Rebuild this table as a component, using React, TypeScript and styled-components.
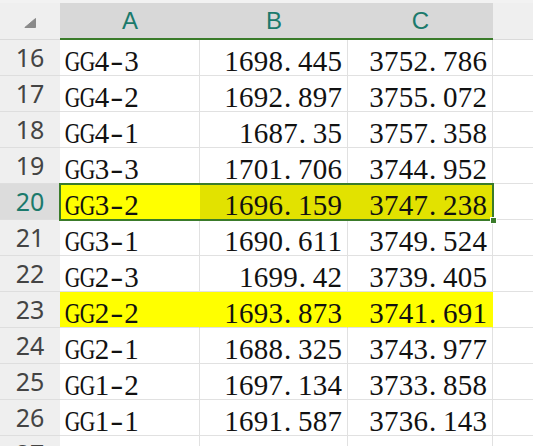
import React from 'react';
import styled, { createGlobalStyle } from 'styled-components';

const GlobalStyle = createGlobalStyle`
  html, body { margin: 0; padding: 0; background: #ffffff; overflow: hidden; }
  body { width: 533px; height: 446px; }
`;

const COLS = '60px 140px 148px 145px 1fr';
const GREEN = '#3a7b2a';
const TEAL = '#1b7a6c';
const GRID = '#e1e1e1';

type Fill = 'none' | 'yellow' | 'selYellow';
const fillColor = (f: Fill) => (f === 'yellow' ? '#ffff00' : f === 'selYellow' ? '#e2e200' : '#ffffff');

const Sheet = styled.div`
  width: 533px;
  height: 446px;
  overflow: hidden;
  display: flex;
  flex-direction: column;
  background: #ffffff;
`;

const HeaderRow = styled.div`
  display: grid;
  grid-template-columns: ${COLS};
  height: 40px;
  padding-top: 3px;
  box-sizing: border-box;
  background: #f2f2f2;
  flex: none;
`;

const Corner = styled.div`
  background: #efefef;
  border-bottom: 1px solid #dadada;
  display: flex;
  align-items: flex-start;
  justify-content: flex-end;
  padding: 15px 24px 0 0;
  box-sizing: border-box;
`;

const ColHead = styled.div<{ $active?: boolean }>`
  background: ${(p) => (p.$active ? '#d8d8d8' : '#efefef')};
  border-bottom: ${(p) => (p.$active ? `2px solid ${GREEN}` : '1px solid #dadada')};
  box-sizing: border-box;
  color: ${TEAL};
  font-family: 'Liberation Sans', Arial, sans-serif;
  font-size: 24px;
  line-height: 32px;
  text-align: center;
  padding-top: 2px;
`;

const Row = styled.div`
  display: grid;
  grid-template-columns: ${COLS};
  height: 36px;
  flex: none;
`;

const RowHead = styled.div<{ $active?: boolean }>`
  grid-row: 1;
  grid-column: 1;
  background: ${(p) => (p.$active ? '#dcdcdc' : '#efefef')};
  color: ${(p) => (p.$active ? TEAL : '#444444')};
  border-bottom: 1px solid #dedede;
  box-sizing: border-box;
  font-family: 'Noto Sans', 'Liberation Sans', sans-serif;
  font-size: 25px;
  line-height: 28px;
  padding-top: 3px;
  text-align: center;
`;

const Cell = styled.div<{ $fill: Fill; $col: number; $align?: 'left' | 'right' }>`
  grid-row: 1;
  grid-column: ${(p) => p.$col};
  background: ${(p) => fillColor(p.$fill)};
  border-right: 1px solid ${(p) => (p.$fill === 'none' ? GRID : fillColor(p.$fill))};
  border-bottom: 1px solid ${GRID};
  box-sizing: border-box;
  font-family: 'Liberation Serif', 'Times New Roman', serif;
  font-size: 29px;
  line-height: 28px;
  padding: 7px 5px 0 5px;
  color: #111111;
  white-space: nowrap;
  overflow: hidden;
  display: flex;
  justify-content: ${(p) => (p.$align === 'right' ? 'flex-end' : 'flex-start')};
`;

type Kind = 'plain' | 'dot' | 'narrow' | 'dash';

const Slot = styled.span<{ $kind: Kind }>`
  display: inline-block;
  width: 14.75px;
  text-align: ${(p) => (p.$kind === 'dot' ? 'left' : 'center')};
  padding-left: ${(p) => (p.$kind === 'dot' ? '1px' : '0')};
  box-sizing: border-box;
`;

const Glyph = styled.span<{ $kind: Kind }>`
  display: inline-block;
  transform: ${(p) => (p.$kind === 'narrow' ? 'scaleX(0.74)' : p.$kind === 'dash' ? 'scaleX(1.35)' : 'none')};
  margin: ${(p) => (p.$kind === 'narrow' ? '0 -4px' : '0')};
`;

const Blank = styled.div`
  grid-row: 1;
  grid-column: 5;
  border-bottom: 1px solid ${GRID};
  box-sizing: border-box;
`;

const Selection = styled.div`
  grid-row: 1;
  grid-column: 2 / 5;
  margin: -1px -1px -1px -1px;
  border: 2px solid ${GREEN};
  position: relative;
  z-index: 2;
  pointer-events: none;
`;

const Handle = styled.div`
  position: absolute;
  right: -5px;
  bottom: -5px;
  width: 5px;
  height: 5px;
  background: ${GREEN};
  border: 1px solid #ffffff;
`;

const kindOf = (ch: string): Kind => (ch === '.' ? 'dot' : ch === '-' ? 'dash' : /[A-Z]/.test(ch) ? 'narrow' : 'plain');

const Mono: React.FC<{ value: string }> = ({ value }) => (
  <span>
    {value.split('').map((ch, i) => {
      const k = kindOf(ch);
      return (
        <Slot key={i} $kind={k}>
          <Glyph $kind={k}>{ch}</Glyph>
        </Slot>
      );
    })}
  </span>
);

const rows: { n: number; a: string; b: string; c: string }[] = [
  { n: 16, a: 'GG4-3', b: '1698.445', c: '3752.786' },
  { n: 17, a: 'GG4-2', b: '1692.897', c: '3755.072' },
  { n: 18, a: 'GG4-1', b: '1687.35', c: '3757.358' },
  { n: 19, a: 'GG3-3', b: '1701.706', c: '3744.952' },
  { n: 20, a: 'GG3-2', b: '1696.159', c: '3747.238' },
  { n: 21, a: 'GG3-1', b: '1690.611', c: '3749.524' },
  { n: 22, a: 'GG2-3', b: '1699.42', c: '3739.405' },
  { n: 23, a: 'GG2-2', b: '1693.873', c: '3741.691' },
  { n: 24, a: 'GG2-1', b: '1688.325', c: '3743.977' },
  { n: 25, a: 'GG1-2', b: '1697.134', c: '3733.858' },
  { n: 26, a: 'GG1-1', b: '1691.587', c: '3736.143' },
  { n: 27, a: '', b: '', c: '' },
];

export default function App() {
  return (
    <>
      <GlobalStyle />
      <Sheet>
        <HeaderRow>
          <Corner>
            <svg width="12" height="10" viewBox="0 0 12 10">
              <path d="M11.5 0.5 L11.5 9.5 L0.8 9.5 Z" fill="#8a8a8a" stroke="#8a8a8a" strokeLinejoin="round" />
            </svg>
          </Corner>
          <ColHead $active>A</ColHead>
          <ColHead $active>B</ColHead>
          <ColHead $active>C</ColHead>
          <ColHead />
        </HeaderRow>
        {rows.map((r) => {
          const sel = r.n === 20;
          const yellow = r.n === 23;
          const fa: Fill = sel || yellow ? 'yellow' : 'none';
          const fbc: Fill = sel ? 'selYellow' : yellow ? 'yellow' : 'none';
          return (
            <Row key={r.n}>
              <RowHead $active={sel}>{r.n}</RowHead>
              <Cell $fill={fa} $col={2}>
                <Mono value={r.a} />
              </Cell>
              <Cell $fill={fbc} $col={3} $align="right">
                <Mono value={r.b} />
              </Cell>
              <Cell $fill={fbc} $col={4} $align="right">
                <Mono value={r.c} />
              </Cell>
              <Blank />
              {sel && (
                <Selection>
                  <Handle />
                </Selection>
              )}
            </Row>
          );
        })}
      </Sheet>
    </>
  );
}
